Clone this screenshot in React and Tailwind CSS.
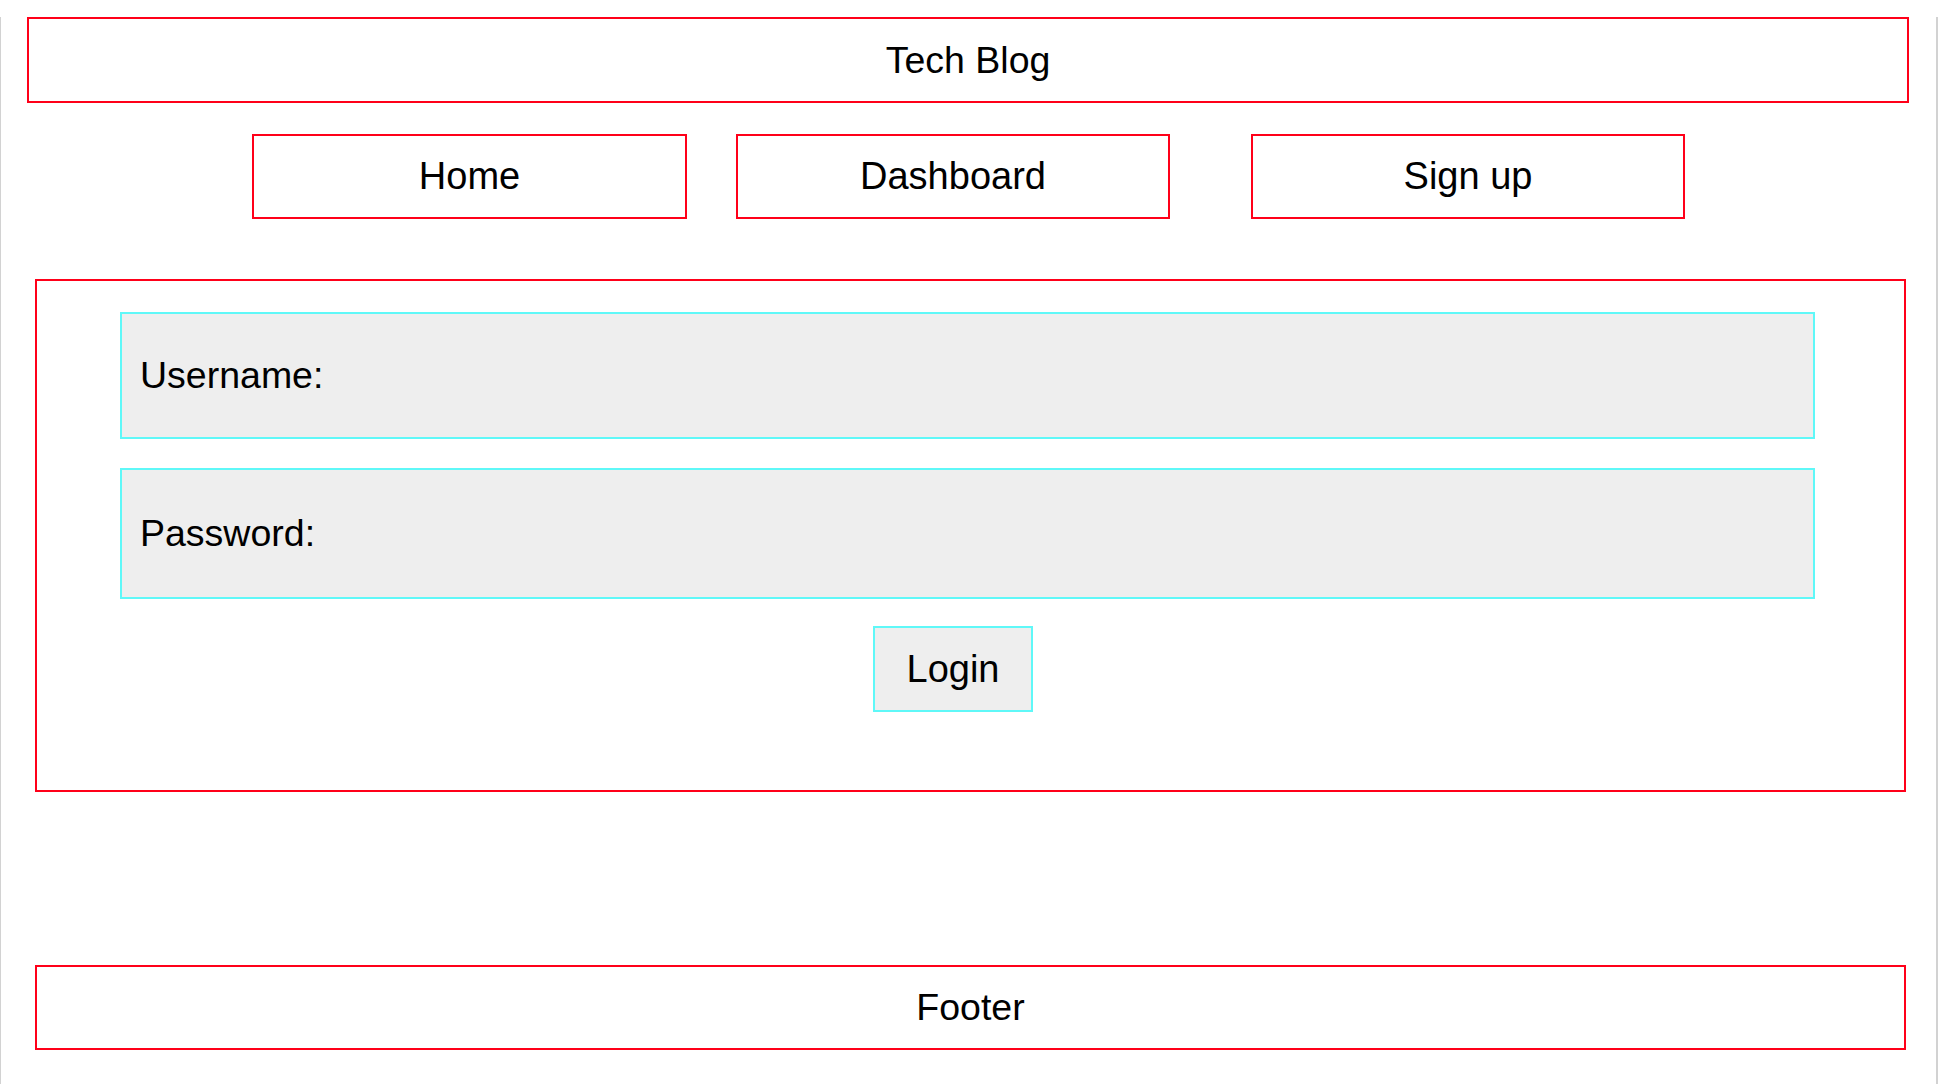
export default function App() {
  return (
    <div className="min-h-screen w-[1938px] border-l border-r-2 border-[#d2d2d2] bg-white font-['Liberation_Sans',Arial,sans-serif] text-black">
      <header className="ml-[26px] mt-[17px] flex h-[86px] w-[1882px] items-center justify-center border-2 border-[#ff0019] text-[37.5px]">
        Tech Blog
      </header>

      <nav className="mt-[31px] flex">
        <a className="ml-[251px] flex h-[85px] w-[435px] items-center justify-center border-2 border-[#ff0019] text-[38px]">
          Home
        </a>
        <a className="ml-[49px] flex h-[85px] w-[434px] items-center justify-center border-2 border-[#ff0019] text-[38px]">
          Dashboard
        </a>
        <a className="ml-[81px] flex h-[85px] w-[434px] items-center justify-center border-2 border-[#ff0019] text-[38px]">
          Sign up
        </a>
      </nav>

      <main className="ml-[34px] mt-[60px] w-[1871px] border-2 border-[#ff0019] pb-[78px] pt-[31px]">
        <form className="flex flex-col">
          <label className="ml-[83px] flex h-[127px] w-[1695px] items-center border-2 border-[#5ff8f8] bg-[#eeeeee] pl-[18px] text-[37.5px]">
            Username:
          </label>
          <label className="ml-[83px] mt-[29px] flex h-[131px] w-[1695px] items-center border-2 border-[#5ff8f8] bg-[#eeeeee] pl-[18px] text-[37.5px]">
            Password:
          </label>
          <button
            type="button"
            className="ml-[836px] mt-[27px] flex h-[86px] w-[160px] items-center justify-center border-2 border-[#5ff8f8] bg-[#eeeeee] text-[38px]"
          >
            Login
          </button>
        </form>
      </main>

      <footer className="ml-[34px] mt-[173px] flex h-[85px] w-[1871px] items-center justify-center border-2 border-[#ff0019] text-[37.5px]">
        Footer
      </footer>
    </div>
  );
}
